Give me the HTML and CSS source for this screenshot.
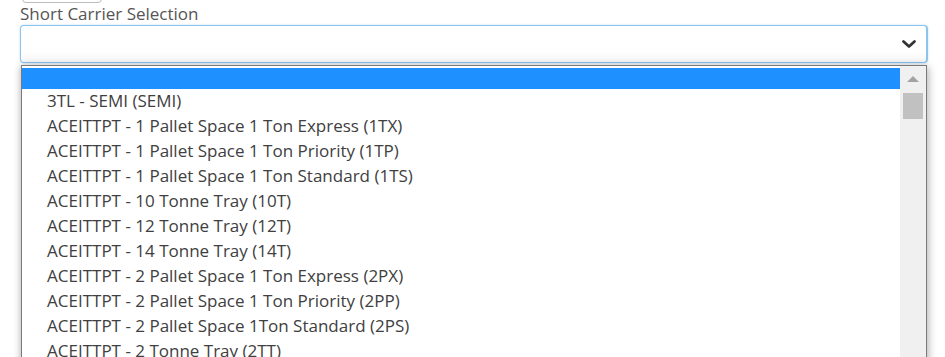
FILE: index.html
```html
<!DOCTYPE html>
<html lang="en">
<head>
  <meta charset="UTF-8" />
  <title>Short Carrier Selection</title>
  <link rel="stylesheet" href="styles.css">
</head>
<body>
  <div id="botao-topo"></div>

  <div class="campo">
    <label class="rotulo" for="carrier">Short Carrier Selection</label>
    <div class="select-box" id="carrier">
      <svg class="seta" width="16" height="10" viewBox="0 0 16 10">
        <path d="M2.5 2.5 L8 7.5 L13.5 2.5" fill="none" stroke="#333" stroke-width="2.8" stroke-linecap="round" stroke-linejoin="round"/>
      </svg>
    </div>

    <div class="lista">
      <ul class="opcoes">
        <li class="ativa">&nbsp;</li>
        <li>3TL - SEMI (SEMI)</li>
        <li>ACEITTPT - 1 Pallet Space 1 Ton Express (1TX)</li>
        <li>ACEITTPT - 1 Pallet Space 1 Ton Priority (1TP)</li>
        <li>ACEITTPT - 1 Pallet Space 1 Ton Standard (1TS)</li>
        <li>ACEITTPT - 10 Tonne Tray (10T)</li>
        <li>ACEITTPT - 12 Tonne Tray (12T)</li>
        <li>ACEITTPT - 14 Tonne Tray (14T)</li>
        <li>ACEITTPT - 2 Pallet Space 1 Ton Express (2PX)</li>
        <li>ACEITTPT - 2 Pallet Space 1 Ton Priority (2PP)</li>
        <li>ACEITTPT - 2 Pallet Space 1Ton Standard (2PS)</li>
        <li>ACEITTPT - 2 Tonne Tray (2TT)</li>
      </ul>
      <div class="rolagem">
        <div class="seta-cima"></div>
        <div class="polegar"></div>
      </div>
    </div>
  </div>
</body>
</html>
```

FILE: styles.css
```css
:root {
  --texto: #404040;
  --azul-ativo: #1e90ff;
  --borda-foco: #8cc4f0;
}

html, body {
  height: 357px;
  overflow: hidden;
}

body {
  margin: 0;
  font-family: "Open Sans", Arial, sans-serif;
  font-size: 17px;
  color: var(--texto);
  background: #fff;
}

#botao-topo {
  position: absolute;
  left: 22px;
  top: -20px;
  width: 78px;
  height: 21px;
  border: 1px solid #bbb;
  border-radius: 4px;
}

.campo {
  padding: 4px 17px 0 20px;
}

.rotulo {
  display: block;
  line-height: 20px;
  color: #555;
  margin-bottom: 1px;
}

.select-box {
  height: 36px;
  border: 1px solid var(--borda-foco);
  border-right-width: 2px;
  border-radius: 4px;
  background: linear-gradient(#fff 70%, #f6f6f6);
  display: flex;
  align-items: center;
  justify-content: flex-end;
  padding-right: 9px;
  box-shadow: 0 0 2px rgba(102, 175, 233, 0.5);
}

.seta {
  display: block;
}

.lista {
  margin: 2px 1px 0 1px;
  height: 320px;
  border: 1px solid #7a7a7a;
  background: #fff;
  display: flex;
  box-shadow: 2px 2px 8px rgba(0, 0, 0, 0.25), -2px 0 6px rgba(0, 0, 0, 0.12);
}

.opcoes {
  list-style: none;
  margin: 0;
  padding: 2px 0 0 0;
  flex: 1;
}

.opcoes li {
  height: 25px;
  line-height: 21px;
  padding-left: 25px;
  white-space: nowrap;
}

.opcoes li.ativa {
  height: 21px;
  background: var(--azul-ativo);
  margin-bottom: 1px;
}

.rolagem {
  width: 26px;
  background: #f0f0f0;
  display: flex;
  flex-direction: column;
  align-items: center;
}

.seta-cima {
  width: 0;
  height: 0;
  margin-top: 10px;
  border-left: 6px solid transparent;
  border-right: 6px solid transparent;
  border-bottom: 6px solid #a3a3a3;
}

.polegar {
  width: 20px;
  height: 26px;
  margin-top: 11px;
  background: #c1c1c1;
}
```
